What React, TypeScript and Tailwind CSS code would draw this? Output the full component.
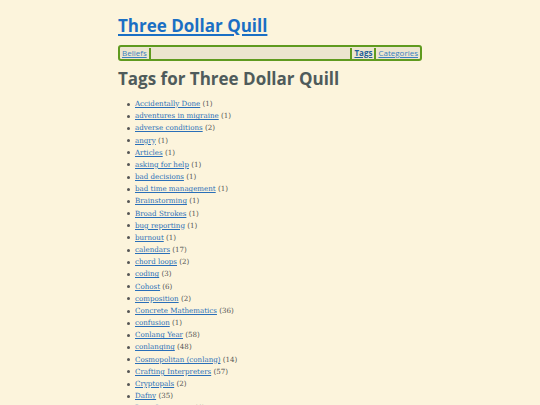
const TAGS: [string, number][] = [
  ['Accidentally Done', 1],
  ['adventures in migraine', 1],
  ['adverse conditions', 2],
  ['angry', 1],
  ['Articles', 1],
  ['asking for help', 1],
  ['bad decisions', 1],
  ['bad time management', 1],
  ['Brainstorming', 1],
  ['Broad Strokes', 1],
  ['bug reporting', 1],
  ['burnout', 1],
  ['calendars', 17],
  ['chord loops', 2],
  ['coding', 3],
  ['Cohost', 6],
  ['composition', 2],
  ['Concrete Mathematics', 36],
  ['confusion', 1],
  ['Conlang Year', 58],
  ['conlanging', 48],
  ['Cosmopolitan (conlang)', 14],
  ['Crafting Interpreters', 57],
  ['Cryptopals', 2],
  ['Dafny', 35],
  ['Data Structures', 4],
];

export default function App() {
  return (
    <div className="min-h-screen w-full bg-[#fcf4dc] font-['DejaVu_Serif',serif]">
      <div className="mx-auto w-[304px] pt-[14px]">
        {/* Site title */}
        <h1 className="font-['Open_Sans',sans-serif] text-[17px] font-bold leading-[24px] text-[#1a6fc4]">
          <a href="#" className="underline decoration-[1.5px] underline-offset-2">Three Dollar Quill</a>
        </h1>

        {/* Nav bar */}
        <nav className="mt-[7px] flex h-[16px] items-center rounded-[3px] border-2 border-[#5f9a1f] bg-[#ece5cf] px-[2px] font-['Open_Sans',sans-serif] text-[8px] leading-none">
          <a href="#" className="text-[#3a7fc0] underline">Beliefs</a>
          <span className="ml-[2px] h-[11px] w-[2px] bg-[#5f9a1f]" />
          <span className="flex-1" />
          <span className="mr-[2px] h-[11px] w-[2px] bg-[#5f9a1f]" />
          <a href="#" className="font-bold text-[#1f5f9a] underline">Tags</a>
          <span className="mx-[2px] h-[11px] w-[2px] bg-[#5f9a1f]" />
          <a href="#" className="text-[#3a7fc0] underline">Categories</a>
        </nav>

        {/* Heading */}
        <h2 className="mt-[6px] font-['Open_Sans',sans-serif] text-[17px] font-bold leading-[24px] text-[#4f5b5b]">
          Tags for Three Dollar Quill
        </h2>

        {/* Tag list */}
        <ul className="mt-[7px] pl-[9px] text-[7.1px] leading-[12.17px] text-[#555]">
          {TAGS.map(([name, count]) => (
            <li key={name} className="flex items-center">
              <span className="mr-[5px] h-[3px] w-[3px] shrink-0 rounded-full bg-[#555]" />
              <span>
                <a href="#" className="text-[#2a6fb8] underline">{name}</a> ({count})
              </span>
            </li>
          ))}
        </ul>
      </div>
    </div>
  );
}
